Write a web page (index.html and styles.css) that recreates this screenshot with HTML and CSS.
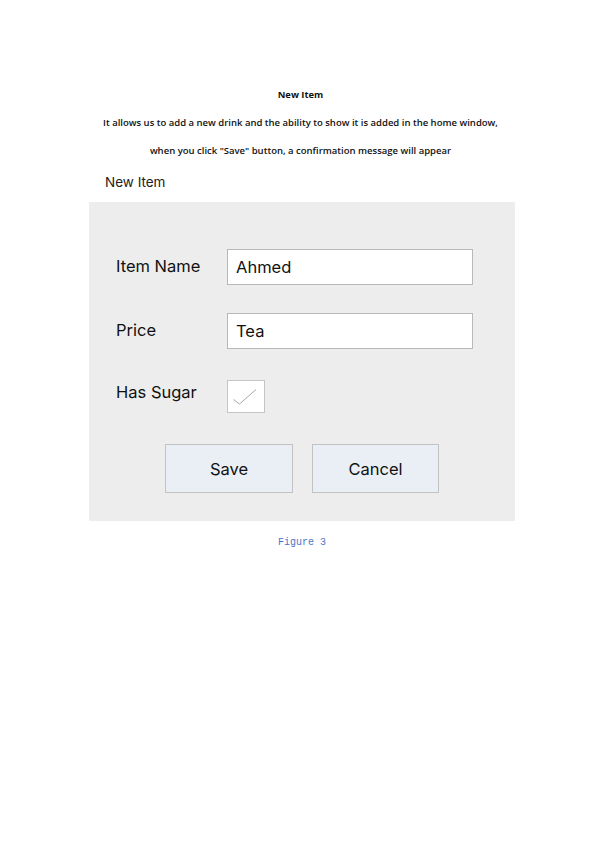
FILE: index.html
```html
<!DOCTYPE html>
<html>
<head>
<meta charset="utf-8">
<link rel="stylesheet" href="styles.css">
</head>
<body>
<div class="page">
  <p class="doc-title">New Item</p>
  <p class="doc-line">It allows us to add a new drink and the ability to show it is added in the home window,</p>
  <p class="doc-line">when you click "Save" button, a confirmation message will appear</p>
  <div class="section-label">New Item</div>
  <div class="panel">
    <div class="row">
      <span class="label">Item Name</span>
      <div class="input">Ahmed</div>
    </div>
    <div class="row">
      <span class="label">Price</span>
      <div class="input">Tea</div>
    </div>
    <div class="row row-check">
      <span class="label">Has Sugar</span>
      <div class="checkbox">
        <svg width="38" height="33" viewBox="0 0 38 33"><path d="M6.5 19.5 L12.5 24 L29 9.5" fill="none" stroke="#a0a0a0" stroke-width="0.9"/></svg>
      </div>
    </div>
    <div class="buttons">
      <div class="btn btn-save">Save</div>
      <div class="btn btn-cancel">Cancel</div>
    </div>
  </div>
  <div class="caption">Figure 3</div>
</div>
</body>
</html>
```
FILE: styles.css
```css
* { box-sizing: border-box; }
html, body { margin: 0; padding: 0; background: #ffffff; }
.page {
  width: 601px;
  padding-top: 81px;
  display: flex;
  flex-direction: column;
  align-items: center;
}
.doc-title, .doc-line {
  margin: 0;
  height: 28px;
  line-height: 28px;
  font-family: "Open Sans", sans-serif;
  color: #111;
  text-align: center;
  white-space: nowrap;
}
.doc-title { font-size: 9.4px; font-weight: 700; }
.doc-line { font-size: 9.5px; font-weight: 600; }
.section-label {
  align-self: flex-start;
  margin-left: 105px;
  margin-top: 7px;
  height: 30px;
  line-height: 20px;
  font-family: "Inter", sans-serif;
  font-size: 13.5px;
  color: #222;
}
.panel {
  width: 426px;
  background: #ededed;
  padding: 47px 0 28px 27px;
  margin-left: 3px;
  display: flex;
  flex-direction: column;
}
.row {
  display: flex;
  align-items: flex-start;
  margin-bottom: 28px;
}
.row-check { margin-top: 3px; margin-bottom: 31px; }
.label {
  width: 111px;
  font-family: "Inter", sans-serif;
  font-size: 16.5px;
  line-height: 24px;
  margin-top: 5px;
  color: #111;
}
.row-check .label { margin-top: 0; }
.input {
  width: 246px;
  height: 36px;
  background: #fff;
  border: 1px solid #b8b8b8;
  padding-left: 8px;
  font-family: "Inter", sans-serif;
  font-size: 16.5px;
  line-height: 34px;
  color: #111;
}
.checkbox {
  width: 38px;
  height: 33px;
  background: #fff;
  border: 1px solid #c4c4c4;
  display: flex;
}
.checkbox svg { display: block; margin: -1px; }
.buttons {
  display: flex;
  justify-content: center;
  gap: 19px;
  margin-left: -27px;
}
.btn {
  height: 49px;
  background: #eaeff6;
  border: 1px solid #c2c2c2;
  display: flex;
  align-items: center;
  justify-content: center;
  font-family: "Inter", sans-serif;
  font-size: 16.5px;
  color: #111;
}
.btn-save { width: 128px; }
.btn-cancel { width: 127px; }
.caption {
  margin-top: 16px;
  margin-left: 3px;
  font-family: "Liberation Mono", monospace;
  font-size: 10px;
  line-height: 12px;
  color: #4a74c9;
}
```
